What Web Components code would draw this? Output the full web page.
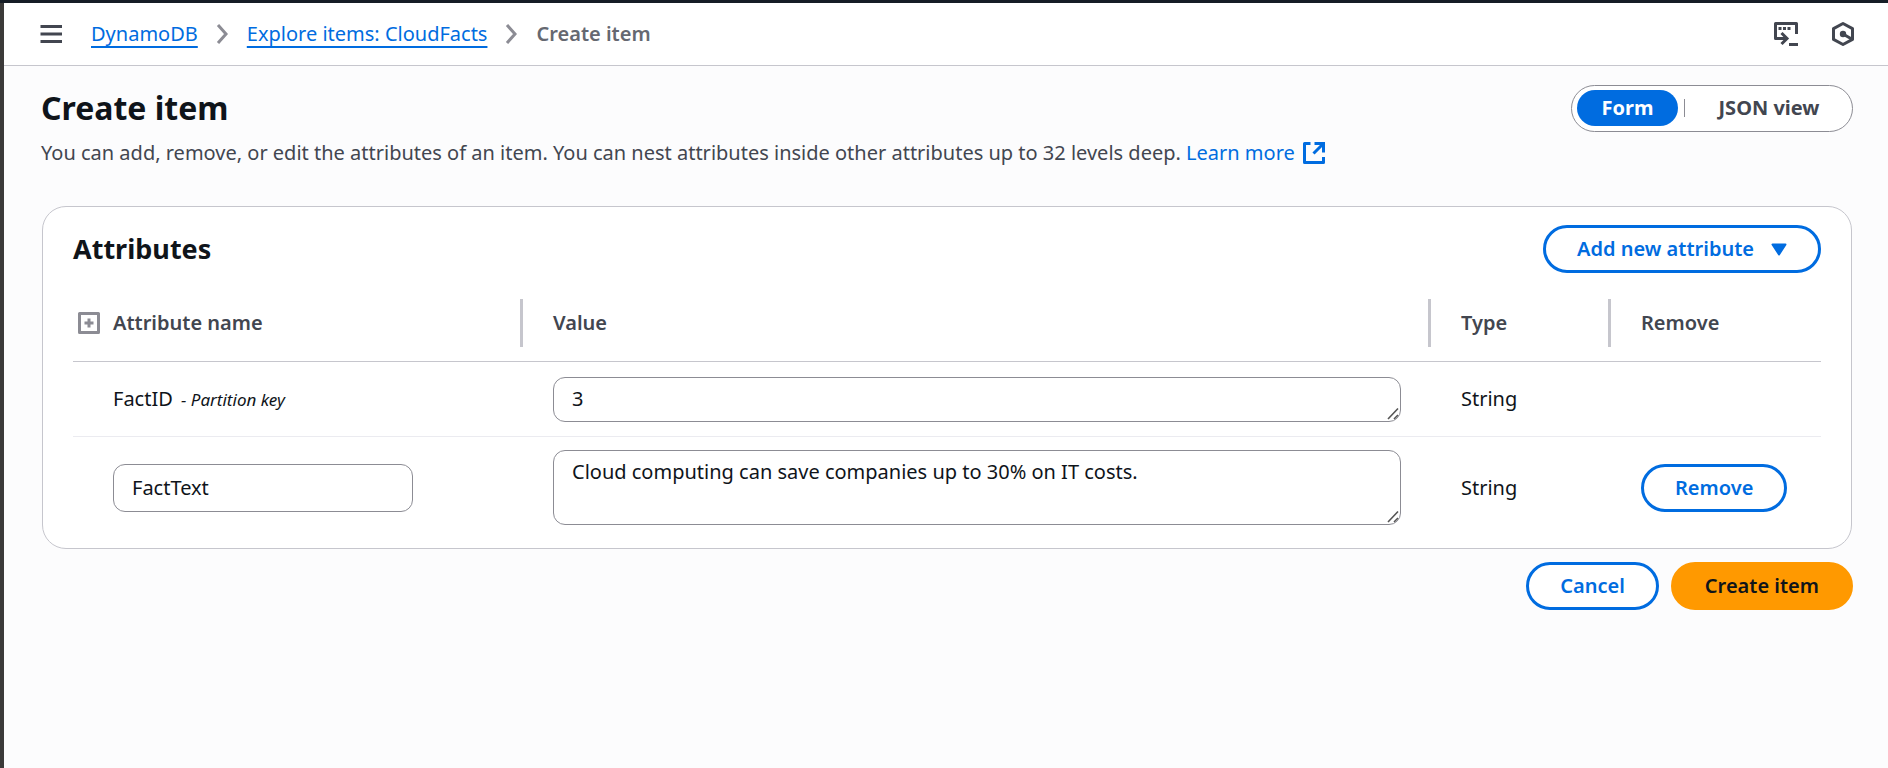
<!DOCTYPE html>
<html lang="en">
<head>
<meta charset="utf-8">
<meta name="viewport" content="width=device-width, initial-scale=1">
<title>Create item | DynamoDB</title>
<style>
  html { height: 100%; }
  body {
    margin: 0;
    min-height: 100%;
    display: flex;
    flex-direction: column;
    box-sizing: border-box;
    background: #fcfcfd;
    --link: #006ce0;
    --heading: #0f141a;
    --text: #424650;
    --muted: #656871;
    --line: #c6c6cd;
    --line-soft: #ebebf0;
    --field-line: #8c8c94;
    --accent: #ff9900;
    color: var(--text);
    font: 20px/30px "Noto Sans", "Open Sans", sans-serif;
  }
  console-page { flex: 1; }
</style>
</head>
<body>
<console-page>
  <console-header slot="header">
    <crumb-item href="#dynamodb">DynamoDB</crumb-item>
    <crumb-item href="#explore">Explore items: CloudFacts</crumb-item>
    <crumb-item current>Create item</crumb-item>
  </console-header>
  <page-heading></page-heading>
  <content-card heading="Attributes">
    <ui-button slot="actions" caret>Add new attribute</ui-button>
    <attribute-table></attribute-table>
  </content-card>
  <form-actions>
    <ui-button>Cancel</ui-button>
    <ui-button variant="primary">Create item</ui-button>
  </form-actions>
</console-page>

<script>
const define = (name, html, setup) => {
  const template = document.createElement('template');
  template.innerHTML = '<style>*{box-sizing:border-box}[hidden]{display:none}</style>' + html;
  customElements.define(name, class extends HTMLElement {
    constructor() {
      super();
      this.attachShadow({ mode: 'open' }).append(template.content.cloneNode(true));
    }
    connectedCallback() { if (setup) setup(this, this.shadowRoot); }
  });
};

define('console-page', `
  <style>
    :host { display: flex; flex-direction: column; box-sizing: border-box;
            border-top: 3px solid #161d26; }
    .body { flex: 1; border-left: 4px solid #3b3a39; }
    main { padding: 19px 35px 32px 37px; }
  </style>
  <div class="body">
    <slot name="header"></slot>
    <main><slot></slot></main>
  </div>`);

define('console-header', `
  <style>
    :host { display: flex; align-items: center; height: 63px; box-sizing: border-box;
            padding: 0 33px 0 36px; background: #fff; border-bottom: 1px solid var(--line); }
    button { display: flex; padding: 0; border: 0; background: none; color: var(--text); }
    nav { flex: 1; margin-left: 28px; }
    ol { display: flex; margin: 0; padding: 0; }
    .tools { display: flex; gap: 32px; }
    svg { display: block; }
  </style>
  <button type="button" aria-label="Open navigation">
    <svg width="23" height="24" viewBox="0 0 23 24" stroke="currentColor" stroke-width="3"><path d="M0.500 4.500h21.500M0.500 12h21.500M0.500 19.500h21.500"/></svg>
  </button>
  <nav aria-label="Breadcrumbs"><ol role="list"><slot></slot></ol></nav>
  <div class="tools">
    <button type="button" aria-label="Open CloudShell">
      <svg width="26" height="26" viewBox="0 0 26 26" fill="none" stroke="currentColor" stroke-width="3">
        <path d="M12 17.500H2.500V2.500H23.500V13" stroke-linejoin="round"/>
        <path d="M8.500 12l5.500 5.500-5.500 5.500"/>
        <path d="M16 23.500h9"/>
        <path d="M5.500 7.500h3M10 7.500h3M14.500 7.500h3"/>
      </svg>
    </button>
    <button type="button" aria-label="Open tutorials">
      <svg width="24" height="26" viewBox="0 0 24 26" fill="none" stroke="currentColor" stroke-width="3">
        <path d="M12 2.500L21.500 7.600V18.400L12 23.500L2.500 18.400V7.600Z" stroke-linejoin="round"/>
        <circle cx="12" cy="13" r="3.200" fill="currentColor" stroke="none"/>
        <path d="M12 13l9.500 5.500"/>
      </svg>
    </button>
  </div>`);

define('crumb-item', `
  <style>
    :host { display: flex; align-items: center; }
    a { color: var(--link); text-decoration: underline; text-decoration-thickness: 2px;
        text-underline-offset: 5px; }
    strong { color: var(--muted); font-weight: 600; }
    svg { margin: 0 18px; color: #8c8c94; }
  </style>
  <a><slot></slot></a>
  <svg width="13" height="20" viewBox="0 0 13 20" fill="none" stroke="currentColor" stroke-width="3" aria-hidden="true"><path d="M2 1l8 9-8 9"/></svg>`,
  (host, root) => {
    host.setAttribute('role', 'listitem');
    const link = root.querySelector('a');
    if (host.hasAttribute('current')) {
      const label = document.createElement('strong');
      label.setAttribute('aria-current', 'page');
      label.append(root.querySelector('slot'));
      link.replaceWith(label);
      root.querySelector('svg').remove();
    } else {
      link.href = host.getAttribute('href');
    }
  });

define('page-heading', `
  <style>
    :host { display: flex; justify-content: space-between; align-items: flex-start; gap: 24px; }
    h1 { margin: 3px 0 10px; color: var(--heading); font-size: 32px; line-height: 40px; font-weight: 700; }
    p { margin: 0; }
    a { color: var(--link); text-decoration: none; white-space: nowrap; }
    svg { margin-left: 2px; vertical-align: -5px; }
  </style>
  <div>
    <h1>Create item</h1>
    <p>You can add, remove, or edit the attributes of an item. You can nest attributes inside other attributes up to 32 levels deep.
      <a href="#learn-more">Learn more
        <svg width="24" height="24" viewBox="0 0 24 24" fill="none" stroke="currentColor" stroke-width="3" role="img" aria-label="Opens in a new tab"><path d="M8.500 2.500H2.500V21.500H21.500V16" stroke-linejoin="round"/><path d="M12.500 2.500H21.500V11.500M21 3L11.500 12.500"/></svg></a></p>
  </div>
  <view-toggle></view-toggle>`);

define('view-toggle', `
  <style>
    :host { display: flex; flex: none; align-items: center; gap: 6px; height: 47px; box-sizing: border-box;
            padding: 0 5px 1px; border: 1px solid var(--field-line); border-radius: 24px; background: #fff; }
    button { height: 36px; min-width: 101px; padding: 0 24px; border: 0; border-radius: 18px; background: none;
             color: var(--text); font: inherit; font-weight: 700; line-height: 30px; }
    button[aria-pressed=true] { background: var(--link); color: #fff; }
    .wide { min-width: 156px; }
    i { width: 1px; height: 18px; background: var(--field-line); }
  </style>
  <button type="button" aria-pressed="true">Form</button>
  <i></i>
  <button type="button" aria-pressed="false" class="wide">JSON view</button>`,
  (host, root) => {
    const buttons = root.querySelectorAll('button');
    buttons.forEach(b => b.onclick = () =>
      buttons.forEach(o => o.setAttribute('aria-pressed', String(o === b))));
  });

define('ui-button', `
  <style>
    :host { display: inline-flex; }
    button { display: flex; align-items: center; gap: 17px; height: 48px; padding: 0 31px;
             border: 3px solid var(--link); border-radius: 24px; background: #fff; color: var(--link);
             font: inherit; font-weight: 600; line-height: 30px; white-space: nowrap; }
    :host([variant=primary]) button { border-color: var(--accent); background: var(--accent); color: var(--heading); }
    :host(:not([caret])) svg { display: none; }
  </style>
  <button type="button"><slot></slot>
    <svg width="16" height="13" viewBox="0 0 16 13" fill="currentColor" stroke="currentColor" stroke-width="2" stroke-linejoin="round" aria-hidden="true"><path d="M1.500 1.500h13L8 11.500z"/></svg>
  </button>`);

define('content-card', `
  <style>
    :host { display: block; box-sizing: border-box; margin: 38px 1px 0; padding: 18px 30px 10px;
            border: 1px solid var(--line); border-radius: 24px; background: #fff; }
    header { display: flex; justify-content: space-between; align-items: center; }
    h2 { margin: 0; color: var(--heading); font-size: 27px; line-height: 36px; font-weight: 700; }
  </style>
  <header><h2></h2><slot name="actions"></slot></header>
  <slot></slot>`,
  (host, root) => { root.querySelector('h2').textContent = host.getAttribute('heading'); });

define('attribute-table', `
  <style>
    :host { display: block; margin-top: 26px; }
    table { width: 100%; table-layout: fixed; border-collapse: separate; border-spacing: 0; color: var(--heading); }
    .name { width: 450px; }
    .type { width: 180px; }
    .remove { width: 210px; }
    th { padding: 0 0 14px; border-bottom: 1px solid var(--line); color: var(--text);
         font-weight: 600; text-align: left; }
    th div { display: flex; align-items: center; gap: 12px; height: 48px; padding-left: 30px;
             border-right: 3px solid var(--line); }
    th:first-child div { padding-left: 4px; }
    th:last-child div { border-right: 0; }
    td { height: 75px; padding: 0 30px; border-bottom: 1px solid var(--line-soft); }
    td:first-child { padding-left: 40px; }
    tr:last-child td { height: 101px; border-bottom: 0; }
    td small { margin-left: 3px; font-size: 17px; font-style: italic; }
    input, textarea { display: block; border: 1px solid var(--field-line); border-radius: 12px;
             background: #fff; color: var(--heading); font: inherit; line-height: 30px; outline: 0; }
    input { width: 300px; height: 48px; padding: 0 18px; }
    textarea { width: 100%; height: 75px; padding: 6px 18px; resize: vertical; overflow: hidden; }
    textarea.short { height: 45px; }
    textarea::-webkit-resizer {
      background: url("data:image/svg+xml,%3Csvg xmlns='http://www.w3.org/2000/svg' width='15' height='15' fill='none' stroke='%23555' stroke-width='1.6'%3E%3Cpath d='M3 13L13 2.500M9 13L13 9'/%3E%3C/svg%3E") right bottom no-repeat;
    }
    .toggle { display: flex; padding: 0; border: 0; background: none; color: var(--field-line); }
  </style>
  <table>
    <colgroup><col class="name"><col><col class="type"><col class="remove"></colgroup>
    <thead>
      <tr>
        <th scope="col"><div>
          <button class="toggle" type="button" aria-label="Expand all">
            <svg width="24" height="24" viewBox="0 0 24 24" fill="none" stroke="currentColor" stroke-width="3"><path d="M2.500 2.500h19v19h-19z" stroke-linejoin="round"/><path d="M12 7.500v9M7.500 12h9"/></svg>
          </button><span id="name">Attribute name</span></div></th>
        <th scope="col"><div id="value">Value</div></th>
        <th scope="col"><div>Type</div></th>
        <th scope="col"><div>Remove</div></th>
      </tr>
    </thead>
    <tbody>
      <tr>
        <td><span id="key">FactID</span> <small>- Partition key</small></td>
        <td><textarea class="short" aria-labelledby="key value">3</textarea></td>
        <td>String</td>
        <td></td>
      </tr>
      <tr>
        <td><input type="text" value="FactText" aria-labelledby="name"></td>
        <td><textarea aria-labelledby="value">Cloud computing can save companies up to 30% on IT costs.</textarea></td>
        <td>String</td>
        <td><ui-button>Remove</ui-button></td>
      </tr>
    </tbody>
  </table>`);

define('form-actions', `
  <style>:host { display: flex; justify-content: flex-end; gap: 12px; margin-top: 13px; }</style>
  <slot></slot>`);
</script>
</body>
</html>
